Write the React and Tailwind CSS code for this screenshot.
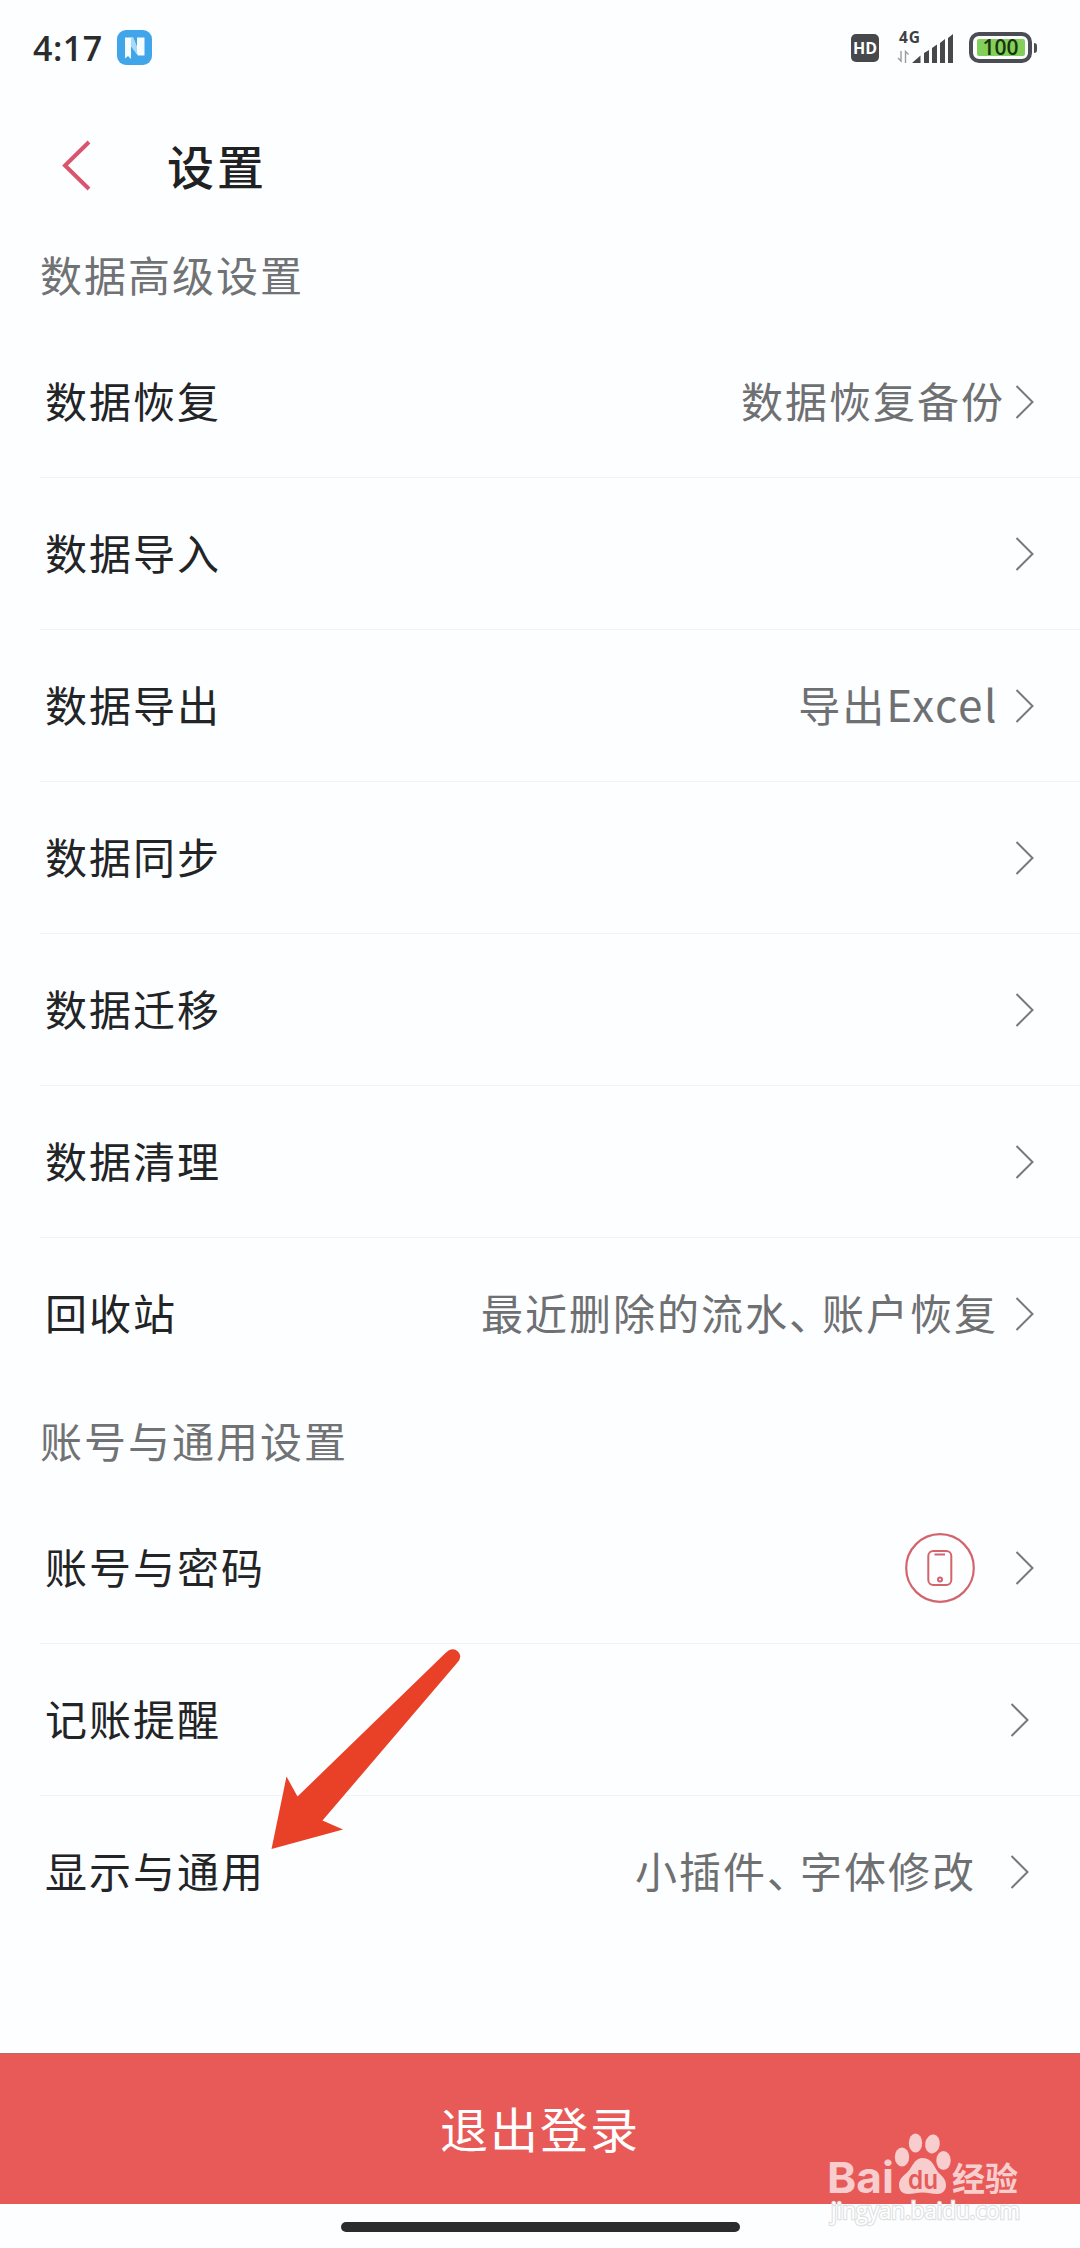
import React from "react";

const dataRows = [
  { label: "数据恢复", value: "数据恢复备份", shift: "mr-[10px]" },
  { label: "数据导入" },
  { label: "数据导出", value: "导出", latin: "Excel", shift: "mr-[17px]" },
  { label: "数据同步" },
  { label: "数据迁移" },
  { label: "数据清理" },
  { label: "回收站", value: "最近删除的流水、账户恢复", shift: "mr-[17px]" },
];

const accountRows = [
  { label: "账号与密码", phone: true },
  { label: "记账提醒", inset: true },
  { label: "显示与通用", value: "小插件、字体修改", shift: "mr-[34px]", inset: true },
];

function Chevron() {
  return (
    <svg className="h-9 w-5 shrink-0" viewBox="0 0 20 36" fill="none" stroke="#77797c" strokeWidth="2">
      <path d="M1.5 2 L17.5 18 L1.5 34" />
    </svg>
  );
}

function PhoneBadge() {
  return (
    <svg className="mr-[39px] size-[72px] shrink-0" viewBox="0 0 72 72" fill="none" stroke="#d4646b" strokeWidth="2">
      <circle cx="36" cy="36" r="33.8" strokeWidth="2.2" />
      <rect x="24.3" y="19" width="23" height="34" rx="5" />
      <path d="M30.5 22.5 H41" />
      <circle cx="36" cy="47.5" r="2" />
    </svg>
  );
}

function Value({ text }) {
  const parts = text.split("、");
  return (
    <>
      {parts[0]}
      {parts.length > 1 && <span className="mr-[10px] [font-feature-settings:'halt']">、</span>}
      {parts[1]}
    </>
  );
}

function Row({ label, value, latin, shift, phone, inset, last }) {
  return (
    <div
      className={`ml-10 flex h-[152px] items-center border-b pl-[5px] ${last ? "border-transparent" : "border-[#eff2f6]"} ${
        inset ? "pr-[50px]" : "pr-[45px]"
      }`}
    >
      <span className="grow pb-[3px] text-[#222426]">{label}</span>
      {value && (
        <span className={`pb-[3px] text-[#6e7072] ${shift}`}>
          <Value text={value} />
          {latin && <span className="text-[44px] leading-none tracking-[1.6px]">{latin}</span>}
        </span>
      )}
      {phone && <PhoneBadge />}
      <Chevron />
    </div>
  );
}

function StatusBar() {
  return (
    <div className="flex h-[95px] items-center pl-[33px] pr-[43px]">
      <span className="font-['Open_Sans',sans-serif] text-[34px] font-semibold leading-none tracking-[0.5px] text-[#2a2c2e]">
        4:17
      </span>
      <svg className="ml-[14px] size-[35px]" viewBox="0 0 35 35">
        <rect width="35" height="35" rx="9" fill="#41a5ea" />
        <path d="M8 7.5 H16 L20 17 V7.5 H27.5 V25.5 H21 L14 16 V29 L11 26 L8 28.5 Z" fill="#f5fcff" />
        <path d="M14 8 L21 25.5 L14 16 Z M14 7.5 H16 L20 17 V23 Z" fill="#a6d7f3" />
      </svg>
      <div className="grow" />
      <div className="flex h-7 w-[28px] items-center justify-center rounded-[5px] bg-[#46484c] font-['Open_Sans',sans-serif] text-[16px] font-bold leading-none tracking-normal text-white">
        HD
      </div>
      <svg className="mb-2 ml-[18px] h-10 w-[58px]" viewBox="0 -8 58 40">
        <text x="2" y="11" fontFamily="Open Sans, sans-serif" fontWeight="700" fontSize="15.5" letterSpacing="1" fill="#3e4043">
          4G
        </text>
        <g stroke="#9a9c9f" strokeWidth="1.4" fill="none">
          <path d="M4 19 V29 L1 26 M8.5 31 V19.5 L11.5 22.5" />
        </g>
        <g fill="#46484c">
          <path d="M15 31 L23.5 23.5 V31 Z M27 21 L32 18 V31 H27 Z M35 16 L40 12.5 V31 H35 Z M43 11 L48 7 V31 H43 Z M51 6 L56 2 V31 H51 Z" />
        </g>
      </svg>
      <div className="ml-[14px] flex h-[31px] w-[63px] items-center justify-center rounded-[10px] border-4 border-[#4c4d54] p-[3px]">
        <div className="flex h-[17px] w-[48px] items-center justify-center rounded-[2px] bg-[#84cf5a] font-['Open_Sans',sans-serif] text-[21px] font-semibold leading-none tracking-normal text-[#17330f]">
          100
        </div>
      </div>
      <div className="ml-[2px] h-[10px] w-[3px] rounded-r bg-[#4c4d54]" />
    </div>
  );
}

function Watermark() {
  return (
    <div className="absolute left-[826px] top-[60px] h-[125px] w-[210px] tracking-normal">
      <svg className="size-full" viewBox="0 -40 210 125">
        <g fill="#f7cdce">
          <text
            x="1"
            y="39.5"
            fontFamily="Inter, sans-serif"
            fontWeight="700"
            fontSize="43"
            textLength="67"
            lengthAdjust="spacingAndGlyphs"
          >
            Bai
          </text>
          <ellipse cx="76" cy="4" rx="7.2" ry="9.5" />
          <ellipse cx="89.5" cy="-10" rx="6.7" ry="9.5" />
          <ellipse cx="106.5" cy="-9" rx="7.3" ry="9.5" transform="rotate(8 106.5 -9)" />
          <ellipse cx="117.5" cy="7.5" rx="7.2" ry="9.5" />
          <path d="M96.500 5 C104 5 107 10 110 16 C113 22 120 24 120 32 C120 38 116 41 111 41 C106 41 102 39.500 96.500 39.500 C91 39.500 87 41 82 41 C76 41 73 37 73 32 C73 24 80 22 84 16 C88 10 90 5 96.500 5 Z" />
          <text
            x="126"
            y="37.5"
            fontFamily="Noto Sans CJK SC, sans-serif"
            fontWeight="700"
            fontSize="33"
            textLength="66"
            lengthAdjust="spacingAndGlyphs"
          >
            经验
          </text>
        </g>
        <text
          x="82"
          y="35.5"
          fontFamily="Inter, sans-serif"
          fontWeight="600"
          fontSize="26"
          textLength="30"
          lengthAdjust="spacingAndGlyphs"
          fill="#e65b58"
        >
          du
        </text>
        <text
          x="5"
          y="66"
          fontFamily="Open Sans, sans-serif"
          fontSize="23"
          textLength="189"
          lengthAdjust="spacingAndGlyphs"
          fill="#ffffff"
          stroke="#e0e2e2"
          strokeWidth="2.5"
          paintOrder="stroke"
        >
          jingyan.baidu.com
        </text>
      </svg>
    </div>
  );
}

export default function App() {
  return (
    <div className="relative flex h-[2248px] w-[1080px] flex-col overflow-hidden bg-[#fdfeff] font-['Noto_Sans_CJK_SC',sans-serif] text-[42px] leading-[60px] tracking-[2px]">
      <StatusBar />
      <header className="flex h-[141px] items-center pl-[61px]">
        <svg className="h-[54px] w-[32px]" viewBox="0 0 32 54" fill="none" stroke="#d9546c" strokeWidth="4">
          <path d="M28 3 L4 26.500 L28 50" />
        </svg>
        <h1 className="ml-[74px] pb-[2px] text-[47px] font-medium tracking-[3px] text-[#1f2123]">设置</h1>
      </header>
      <h2 className="flex h-[90px] items-center pl-10 pb-[15px] text-[#707274]">数据高级设置</h2>
      <section>
        {dataRows.map((row, i) => (
          <Row key={row.label} {...row} last={i === dataRows.length - 1} />
        ))}
      </section>
      <h2 className="flex h-[102px] items-center pl-10 pb-[3px] text-[#707274]">账号与通用设置</h2>
      <section>
        {accountRows.map((row, i) => (
          <Row key={row.label} {...row} last={i === accountRows.length - 1} />
        ))}
      </section>
      <div className="grow" />
      <footer className="relative h-[195px] shrink-0">
        <button className="flex h-[151px] w-full items-center justify-center border-t border-[#b5696a] bg-[#e85a58] pb-[4px] text-[48px] tracking-[2px] text-white">
          退出登录
        </button>
        <div className="mx-auto mt-[18px] h-[10px] w-[399px] rounded-full bg-[#292b2d]" />
        <Watermark />
      </footer>
      <svg className="absolute left-[270px] top-[1645px] h-[206px] w-[192px]" viewBox="0 0 192 206" fill="#e94127">
        <path d="M1.500 204 L16.500 131.500 L27.500 151.500 L175 8.500 Q182 1 188 6.500 Q193 12 187 18 L52.500 175.500 L73 184.500 Z" />
      </svg>
    </div>
  );
}
